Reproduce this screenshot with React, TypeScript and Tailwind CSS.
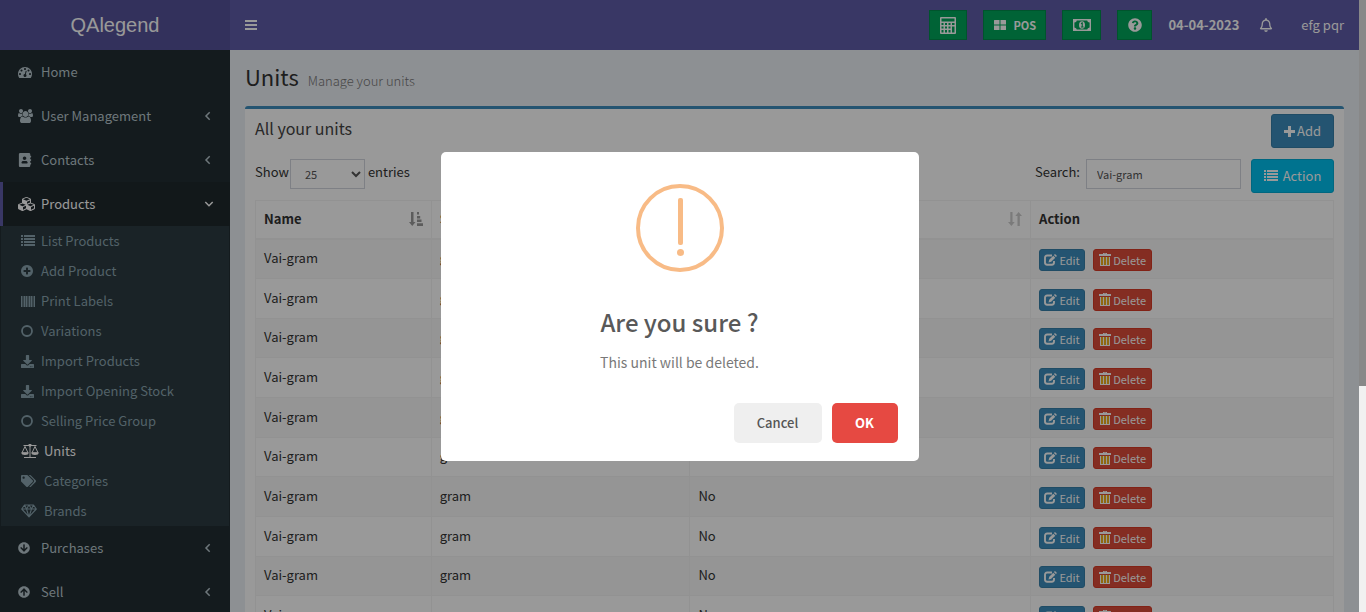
import type { ReactNode } from "react";
import {
  FaAddressBook,
  FaArrowCircleDown,
  FaArrowCircleUp,
  FaDownload,
  FaQuestionCircle,
  FaRegBell,
  FaTags,
} from "react-icons/fa";

type GlyphProps = { box: string; className: string; children: ReactNode };

function Glyph({ box, className, children }: GlyphProps) {
  return (
    <svg viewBox={box} className={`shrink-0 ${className}`} fill="currentColor" aria-hidden="true">
      {children}
    </svg>
  );
}

const DashboardIcon = () => (
  <Glyph box="0 0 1792 1792" className="h-[14px] w-[14px]">
    <path d="M384 1152q0-53-37.5-90.5t-90.5-37.5-90.5 37.5-37.5 90.5 37.5 90.5 90.5 37.5 90.5-37.5 37.5-90.5zM576 704q0-53-37.5-90.5t-90.5-37.5-90.5 37.5-37.5 90.5 37.5 90.5 90.5 37.5 90.5-37.5 37.5-90.5zM1004 1185l101-382q6-26-7.500-48.500t-38.500-29.500-48 6.500-30 39.500l-101 382q-60 5-107 43.500t-63 98.500q-20 77 20 146t117 89 146-20 89-117q16-60-6-117t-72-91zM1664 1152q0-53-37.5-90.5t-90.5-37.5-90.5 37.5-37.5 90.5 37.5 90.5 90.5 37.5 90.5-37.5 37.5-90.5zM1024 512q0-53-37.5-90.5t-90.5-37.5-90.5 37.5-37.5 90.5 37.5 90.5 90.5 37.5 90.5-37.5 37.5-90.5zM1472 704q0-53-37.5-90.5t-90.5-37.5-90.5 37.5-37.5 90.5 37.5 90.5 90.5 37.5 90.5-37.5 37.5-90.5zM1792 1152q0 261-141 483-19 29-54 29h-1402q-35 0-54-29-141-221-141-483 0-182 71-348t191-286 286-191 348-71 348 71 286 191 191 286 71 348z" />
  </Glyph>
);

const UsersIcon = () => (
  <Glyph box="0 0 1920 1792" className="h-[14px] w-[15px]">
    <path d="M593 896q-162 5-265 128h-134q-82 0-138-40.500t-56-118.500q0-353 124-353 6 0 43.500 21t97.500 42.500 119 21.500q67 0 133-23-5 37-5 66 0 139 81 256zM1664 1533q0 120-73 189.500t-194 69.500h-874q-121 0-194-69.500t-73-189.500q0-53 3.500-103.500t14-109 26.500-108.500 43-97.500 62-81 85.500-53.500 111.500-20q10 0 43 21.500t73 48 107 48 135 21.500 135-21.500 107-48 73-48 43-21.500q61 0 111.500 20t85.500 53.500 62 81 43 97.500 26.500 108.500 14 109 3.500 103.500zM640 256q0 106-75 181t-181 75-181-75-75-181 75-181 181-75 181 75 75 181zM1344 640q0 159-112.500 271.500t-271.500 112.500-271.500-112.500-112.500-271.500 112.500-271.500 271.500-112.500 271.500 112.500 112.500 271.500zM1920 865q0 78-56 118.500t-138 40.500h-134q-103-123-265-128 81-117 81-256 0-29-5-66 66 23 133 23 59 0 119-21.500t97.500-42.500 43.500-21q124 0 124 353zM1792 256q0 106-75 181t-181 75-181-75-75-181 75-181 181-75 181 75 75 181z" />
  </Glyph>
);

const CubesIcon = () => (
  <Glyph box="0 0 2304 1792" className="h-[14px] w-[18px]">
    <path d="M640 1632l384-192v-314l-384 164v342zM576 1178l404-173-404-173-404 173zM1664 1632l384-192v-314l-384 164v342zM1600 1178l404-173-404-173-404 173zM1152 865l384-165v-266l-384 164v267zM1088 486l441-189-441-189-441 189zM2176 1024v416q0 36-19 67t-52 47l-448 224q-25 14-57 14t-57-14l-448-224q-4-2-7-4-2 2-7 4l-448 224q-25 14-57 14t-57-14l-448-224q-33-16-52-47t-19-67v-416q0-38 21.5-70t56.500-48l434-186v-400q0-38 21.500-70t56.500-48l448-192q23-10 50-10t50 10l448 192q35 16 56.500 48t21.500 70v400l434 186q36 16 57 48t21 70z" />
  </Glyph>
);

const ListIcon = () => (
  <Glyph box="0 0 14 12" className="h-[12px] w-[14px]">
    <path d="M0 0h2v2H0zM3 0h11v2H3zM0 3h2v2H0zM3 3h11v2H3zM0 6h2v2H0zM3 6h11v2H3zM0 9h2v2H0zM3 9h11v2H3z" />
  </Glyph>
);

const PlusCircleIcon = () => (
  <Glyph box="0 0 1536 1792" className="h-[14px] w-[12px]">
    <path d="M1216 960v-128q0-26-19-45t-45-19h-256v-256q0-26-19-45t-45-19h-128q-26 0-45 19t-19 45v256h-256q-26 0-45 19t-19 45v128q0 26 19 45t45 19h256v256q0 26 19 45t45 19h128q26 0 45-19t19-45v-256h256q26 0 45-19t19-45zM1536 896q0 209-103 385.500t-279.500 279.500-385.500 103-385.500-103-279.500-279.500-103-385.500 103-385.500 279.500-279.500 385.500-103 385.500 103 279.500 279.500 103 385.500z" />
  </Glyph>
);

const BarcodeIcon = () => (
  <Glyph box="0 0 28 22" className="h-[11px] w-[14px]">
    <path d="M0 0h2v22H0zM3 0h1v22H3zM5 0h3v22H5zM9 0h3v22H9zM13 0h2v22h-2zM16 0h2v22h-2zM19 0h3v22h-3zM23 0h2v22h-2zM26 0h2v22h-2z" />
  </Glyph>
);

const RingIcon = () => (
  <Glyph box="0 0 12 12" className="h-[12px] w-[12px]">
    <circle cx="6" cy="6" r="5" fill="none" stroke="currentColor" strokeWidth="1.8" />
  </Glyph>
);

const ScaleIcon = () => (
  <Glyph box="0 0 18 14" className="h-[14px] w-[18px]">
    <path d="M2.500 1h5a1.500 1.500 0 0 1 3 0h5v1h-5.200l-.8.700V13h5.500v1H3v-1h5.500V2.700L7.700 2H2.500z" />
    <path
      d="M4 2.500 1 8.800h6zM14 2.500l-3 6.300h6z"
      fill="none"
      stroke="currentColor"
      strokeWidth="1"
      strokeLinejoin="round"
    />
    <path d="M.3 8.500h7.400q0 2.500-3.700 2.500T.3 8.500zM10.300 8.500h7.400q0 2.500-3.700 2.500t-3.700-2.500z" />
  </Glyph>
);

const DiamondIcon = () => (
  <Glyph box="0 0 16 14" className="h-[14px] w-[16px]">
    <path
      d="M3.5 1h9L15.300 5 8 12.800.7 5zM.7 5h14.600M3.500 1l2 4L8 12.800 10.500 5l2-4M5.500 5 8 1l2.500 4"
      fill="none"
      stroke="currentColor"
      strokeWidth="1.1"
      strokeLinejoin="round"
    />
  </Glyph>
);

const Chevron = ({ open }: { open?: boolean }) => (
  <Glyph box="0 0 10 10" className="h-[10px] w-[10px]">
    <path
      d={open ? "M1.300 3 5 6.700 8.700 3" : "M6.700 1.300 3 5l3.700 3.700"}
      fill="none"
      stroke="currentColor"
      strokeWidth="1.500"
    />
  </Glyph>
);

const CalculatorIcon = () => (
  <Glyph box="0 0 16 17" className="h-[17px] w-[16px]">
    <path
      fillRule="evenodd"
      d="M1 0h14q1 0 1 1v15q0 1-1 1H1q-1 0-1-1V1q0-1 1-1zM1.500 1.500v3h13v-3zM1.500 6v2h2V6zM5 6v2h2V6zM8.500 6v2h2V6zM12 6v2h2.500V6zM1.500 9.500v2h2v-2zM5 9.500v2h2v-2zM8.500 9.500v2h2v-2zM1.500 13v2.500h2V13zM5 13v2.500h2V13zM8.500 13v2.500h2V13zM12 9.500v6h2.500v-6z"
    />
  </Glyph>
);

const MoneyIcon = () => (
  <Glyph box="0 0 18 12" className="h-[12px] w-[18px]">
    <path
      fillRule="evenodd"
      d="M0 0h18v12H0zM3.800 1.400Q3.600 3.300 1.400 3.600v4.800q2.200.3 2.400 2.200h10.400q.2-1.900 2.400-2.200V3.600q-2.200-.3-2.400-2.200z"
    />
    <ellipse cx="9" cy="6" rx="3" ry="3.800" />
    <path d="M7.800 4.200 9 3.300h.8v4.200h.8v.9H7.900v-.9h.8V4.800l-.6.4z" fill="#00a65a" />
  </Glyph>
);

const WindowsIcon = () => (
  <Glyph box="0 0 12 10" className="h-[10px] w-[12px]">
    <path d="M0 .500Q0 0 .5 0h5v4.500H0zM6.500 0h5q.5 0 .5.500v4H6.500zM0 5.500h5.500V10h-5Q0 10 0 9.500zM6.500 5.500H12v4q0 .5-.5.500h-5z" />
  </Glyph>
);

const PlusIcon = () => (
  <Glyph box="0 0 11 11" className="h-[11px] w-[11px]">
    <path d="M4 0h3v4h4v3H7v4H4V7H0V4h4z" />
  </Glyph>
);

const EditIcon = () => (
  <Glyph box="0 0 13 12" className="h-[12px] w-[13px]">
    <path
      d="M8 1.500H3.200q-2.200 0-2.200 2.200v4.800q0 2.200 2.200 2.200h4.600q2.200 0 2.200-2.200V7"
      fill="none"
      stroke="currentColor"
      strokeWidth="1.900"
    />
    <path d="M11 0l2 1.900-1.100 1.200-2-2zM9.300 1.700l2 2L7.200 7.800l-2.700.8.700-2.800z" />
  </Glyph>
);

const TrashIcon = () => (
  <Glyph box="0 0 12 13" className="h-[13px] w-[12px]">
    <path d="M2 4h8v8H2z" fill="#f0b01c" />
    <path
      fillRule="evenodd"
      d="M4 0h4v1h4v2H0V1h4zM5 .7V1h2V.7zM1 4h1v8h8V4h1v9H1zM4 4h1v8H4zM7 4h1v8H7z"
    />
  </Glyph>
);

const SortAscIcon = () => (
  <Glyph box="0 0 14 14" className="h-[14px] w-[14px]">
    <path d="M2 0h2.500v10H6.500L3.250 14 0 10h2zM8 0h2v2.500H8zM8 4h3.200v2.500H8zM8 7.500h4.500V10H8zM8 11.300h6V14H8z" />
  </Glyph>
);

const SortIcon = () => (
  <Glyph box="0 0 14 14" className="h-[14px] w-[14px]">
    <path d="M2.300 0h2.200v10h2.200L3.400 14 0 10h2.300zM9.500 14V4H7.300L10.600 0 14 4h-2.200v10z" />
  </Glyph>
);

type MenuItem = { label: string; icon: ReactNode; closed?: boolean };

const topMenu: MenuItem[] = [
  { label: "Home", icon: <DashboardIcon /> },
  { label: "User Management", icon: <UsersIcon />, closed: true },
  { label: "Contacts", icon: <FaAddressBook className="h-[14px] w-[14px]" />, closed: true },
];

const bottomMenu: MenuItem[] = [
  { label: "Purchases", icon: <FaArrowCircleDown className="h-[12px] w-[12px]" />, closed: true },
  { label: "Sell", icon: <FaArrowCircleUp className="h-[12px] w-[12px]" />, closed: true },
];

const productMenu: (MenuItem & { active?: boolean; wide?: boolean })[] = [
  { label: "List Products", icon: <ListIcon /> },
  { label: "Add Product", icon: <PlusCircleIcon /> },
  { label: "Print Labels", icon: <BarcodeIcon /> },
  { label: "Variations", icon: <RingIcon /> },
  { label: "Import Products", icon: <FaDownload className="h-[13px] w-[13px]" /> },
  { label: "Import Opening Stock", icon: <FaDownload className="h-[13px] w-[13px]" /> },
  { label: "Selling Price Group", icon: <RingIcon /> },
  { label: "Units", icon: <ScaleIcon />, active: true, wide: true },
  { label: "Categories", icon: <FaTags className="h-[14px] w-[15px]" />, wide: true },
  { label: "Brands", icon: <DiamondIcon />, wide: true },
];

const rows = ["Yes", "No", "Yes", "No", "No", "Yes", "No", "No", "No", "No"].map((decimal) => ({
  name: "Vai-gram",
  short: "gram",
  decimal,
}));

function MainLink({ item }: { item: MenuItem }) {
  return (
    <a href="#" className="flex h-11 items-center pr-[17px] pl-[18px] text-[#b8c7ce]">
      <span className="flex w-[23px] items-center">{item.icon}</span>
      <span className="grow">{item.label}</span>
      {item.closed && <Chevron />}
    </a>
  );
}

function Sidebar() {
  return (
    <aside className="flex w-[230px] shrink-0 flex-col overflow-hidden bg-[#222d32]">
      <a
        href="#"
        className="flex h-[50px] shrink-0 items-center justify-center bg-[#555299] font-['Liberation_Sans',sans-serif] text-xl text-white"
      >
        QAlegend
      </a>
      <nav className="text-[13px] leading-5">
        {topMenu.map((item) => (
          <MainLink key={item.label} item={item} />
        ))}
        <a
          href="#"
          className="flex h-11 items-center border-l-[3px] border-[#605ca8] bg-[#1e282c] pr-4 pl-[15px] text-white"
        >
          <span className="flex w-[23px] items-center">
            <CubesIcon />
          </span>
          <span className="grow">Products</span>
          <Chevron open />
        </a>
        <div className="mx-px bg-[#2c3b41]">
          {productMenu.map((item) => (
            <a
              key={item.label}
              href="#"
              className={`flex h-[30px] items-center pl-5 ${item.active ? "text-white" : "text-[#8aa4af]"}`}
            >
              <span className={`flex items-center ${item.wide ? "w-[23px]" : "w-5"}`}>{item.icon}</span>
              {item.label}
            </a>
          ))}
        </div>
        {bottomMenu.map((item) => (
          <MainLink key={item.label} item={item} />
        ))}
      </nav>
    </aside>
  );
}

const greenButton =
  "flex h-[30px] items-center justify-center border border-[#008d4c] bg-[#00a65a] text-white";

function TopBar() {
  return (
    <header className="flex h-[50px] shrink-0 items-center bg-[#605ca8] px-[15px] text-[13px] text-white">
      <button type="button" aria-label="Toggle navigation" className="mr-auto">
        <Glyph box="0 0 12 10" className="h-[10px] w-[12px]">
          <path d="M0 0h12v2H0zM0 4h12v2H0zM0 8h12v2H0z" />
        </Glyph>
      </button>
      <div className="flex items-center gap-4">
        <button type="button" aria-label="Calculator" className={`${greenButton} w-[38px]`}>
          <CalculatorIcon />
        </button>
        <button type="button" className={`${greenButton} w-[63px] gap-2 text-[11px] font-bold`}>
          <WindowsIcon />
          POS
        </button>
        <button type="button" aria-label="Register details" className={`${greenButton} w-[39px]`}>
          <MoneyIcon />
        </button>
        <button type="button" aria-label="Help" className={`${greenButton} w-[35px]`}>
          <FaQuestionCircle className="h-[14px] w-[14px]" />
        </button>
        <span className="font-bold">04-04-2023</span>
      </div>
      <button type="button" aria-label="Notifications" className="mr-7 ml-5">
        <FaRegBell className="h-[14px] w-[14px]" />
      </button>
      <a href="#">efg pqr</a>
    </header>
  );
}

const cell = "border border-[#f4f4f4] px-2 text-left align-middle";

function UnitsTable() {
  return (
    <table className="mt-[7px] w-full table-fixed border-collapse">
      <colgroup>
        <col className="w-[16.300%]" />
        <col className="w-[24%]" />
        <col className="w-[31.600%]" />
        <col />
      </colgroup>
      <thead>
        <tr className="h-[38px]">
          <th className={`${cell} border-b-2`}>
            <span className="flex items-center justify-between">
              Name
              <span className="text-[#999]">
                <SortAscIcon />
              </span>
            </span>
          </th>
          <th className={`${cell} border-b-2`}>
            <span className="flex items-center justify-between">
              Short name
              <span className="text-[#ccc]">
                <SortIcon />
              </span>
            </span>
          </th>
          <th className={`${cell} border-b-2`}>
            <span className="flex items-center justify-between">
              Allow decimal
              <span className="text-[#ccc]">
                <SortIcon />
              </span>
            </span>
          </th>
          <th className={`${cell} border-b-2`}>Action</th>
        </tr>
      </thead>
      <tbody>
        {rows.map((row, i) => (
          <tr key={i} className="h-10 odd:bg-[#f9f9f9] [&:nth-child(3n)]:h-[39px]">
            <td className={`${cell} pb-[2px]`}>{row.name}</td>
            <td className={`${cell} pb-[2px]`}>{row.short}</td>
            <td className={`${cell} pb-[2px]`}>{row.decimal}</td>
            <td className={`${cell} pt-[2px]`}>
              <div className="flex gap-2 text-[11px] text-white">
                <button
                  type="button"
                  className="flex h-[22px] w-[46px] items-center justify-center gap-[2px] rounded-[3px] border border-[#367fa9] bg-[#3c8dbc]"
                >
                  <EditIcon />
                  Edit
                </button>
                <button
                  type="button"
                  className="flex h-[22px] w-[59px] items-center justify-center gap-[2px] rounded-[3px] border border-[#d73925] bg-[#dd4b39]"
                >
                  <TrashIcon />
                  Delete
                </button>
              </div>
            </td>
          </tr>
        ))}
      </tbody>
    </table>
  );
}

function UnitsPanel() {
  return (
    <section className="rounded-[3px] border-t-[3px] border-[#3c8dbc] bg-white px-[10px] pt-[5px] pb-3">
      <div className="flex items-start justify-between">
        <h3 className="text-base leading-7 text-[#444]">All your units</h3>
        <button
          type="button"
          className="flex h-[34px] w-[63px] items-center justify-center gap-[2px] rounded-[3px] border border-[#367fa9] bg-[#3c8dbc] text-white"
        >
          <PlusIcon />
          Add
        </button>
      </div>
      <div className="mt-[11px] flex items-start">
        <label htmlFor="page-size" className="py-[3px]">
          Show
        </label>
        <select
          id="page-size"
          defaultValue="25"
          className="mr-[3px] ml-px h-[30px] w-[75px] border border-[#d2d6de] bg-white pl-[10px] text-[11px] text-[#555]"
        >
          <option>25</option>
          <option>50</option>
          <option>100</option>
        </select>
        <span className="mr-auto py-[3px]">entries</span>
        <label htmlFor="search" className="py-[3px]">
          Search:
        </label>
        <input
          id="search"
          type="search"
          defaultValue="Vai-gram"
          className="mr-[10px] ml-[6px] h-[30px] w-[155px] border border-[#d2d6de] bg-white px-[10px] text-[11px] text-[#555]"
        />
        <button
          type="button"
          className="flex h-[34px] w-[83px] items-center justify-center gap-[5px] rounded-[3px] border border-[#00acd6] bg-[#00c0ef] text-white"
        >
          <ListIcon />
          Action
        </button>
      </div>
      <UnitsTable />
    </section>
  );
}

function ConfirmDialog() {
  return (
    <div className="absolute inset-0 flex items-center justify-center bg-black/40">
      <div
        role="dialog"
        aria-modal="true"
        aria-labelledby="confirm-title"
        className="flex w-[478px] flex-col items-center rounded-[5px] bg-white pt-8"
      >
        <svg viewBox="0 0 88 88" className="h-[88px] w-[88px]" fill="#f8bb86" aria-hidden="true">
          <circle cx="44" cy="44" r="42" fill="none" stroke="#f8bb86" strokeWidth="4" />
          <rect x="42" y="14" width="5" height="47" rx="2" />
          <circle cx="44.500" cy="68.500" r="3.500" />
        </svg>
        <h2 id="confirm-title" className="mt-[30px] text-2xl leading-10 font-medium text-[#595959]">
          Are you sure ?
        </h2>
        <p className="mt-2 text-sm leading-6 text-[#797979]">This unit will be deleted.</p>
        <div className="mt-[29px] mb-[18px] flex gap-[10px] self-end pr-[21px] text-[13px]">
          <button type="button" className="h-10 w-[88px] rounded-[5px] bg-[#efefef] font-medium text-[#555]">
            Cancel
          </button>
          <button type="button" className="h-10 w-[66px] rounded-[5px] bg-[#e64942] font-bold text-white">
            OK
          </button>
        </div>
      </div>
    </div>
  );
}

export default function App() {
  return (
    <div className="flex h-screen overflow-hidden font-['Noto_Sans_CJK_SC',sans-serif] text-[13px] leading-5 text-[#333]">
      <div className="relative flex min-w-0 grow">
        <Sidebar />
        <div className="flex min-w-0 grow flex-col">
          <TopBar />
          <main className="grow overflow-hidden bg-[#ecf0f5] px-[15px]">
            <h1 className="flex h-14 items-baseline gap-[9px] pt-[10px] text-[22px] leading-8">
              Units
              <small className="text-[13px] font-light text-[#777]">Manage your units</small>
            </h1>
            <UnitsPanel />
          </main>
        </div>
        <ConfirmDialog />
      </div>
      <div className="w-[7px] shrink-0 bg-[#f1f1f1]" aria-hidden="true">
        <div className="h-[63%] bg-[#888]" />
      </div>
    </div>
  );
}
